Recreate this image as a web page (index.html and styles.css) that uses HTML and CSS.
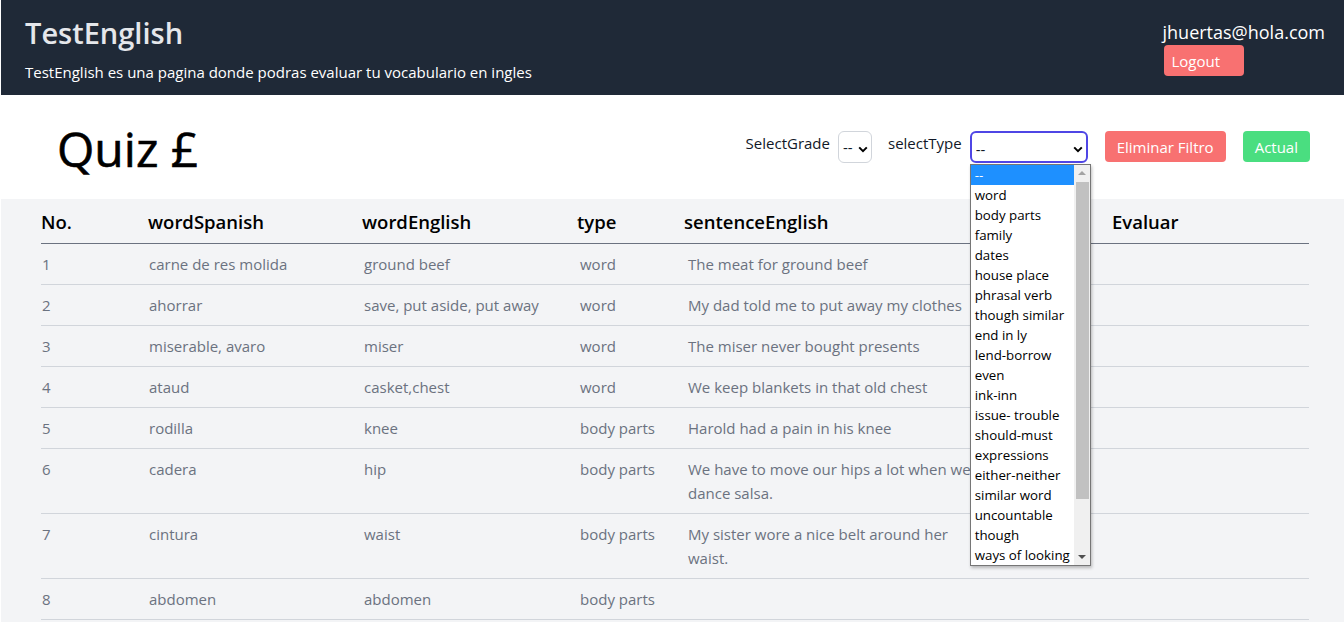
FILE: index.html
```html
<!DOCTYPE html>
<html lang="es">
<head>
<meta charset="utf-8">
<title>TestEnglish</title>
<link rel="stylesheet" href="styles.css">
</head>
<body>
<header class="topbar">
  <div class="brand">
    <h1 class="brand-title">TestEnglish</h1>
    <p class="brand-sub">TestEnglish es una pagina donde podras evaluar tu vocabulario en ingles</p>
  </div>
  <div class="user">
    <span class="user-email">jhuertas@hola.com</span>
    <button class="btn btn-red btn-logout">Logout</button>
  </div>
</header>

<section class="toolbar">
  <h2 class="quiz-title">Quiz £</h2>
  <div class="filters">
    <label class="filter-label">SelectGrade</label>
    <select class="select select-grade"><option>--</option></select>
    <label class="filter-label label-type">selectType</label>
    <div class="type-wrap">
      <select class="select select-type"><option>--</option></select>
      <div class="dropdown">
        <ul class="dropdown-list">
          <li class="active">--</li>
          <li>word</li>
          <li>body parts</li>
          <li>family</li>
          <li>dates</li>
          <li>house place</li>
          <li>phrasal verb</li>
          <li>though similar</li>
          <li>end in ly</li>
          <li>lend-borrow</li>
          <li>even</li>
          <li>ink-inn</li>
          <li>issue- trouble</li>
          <li>should-must</li>
          <li>expressions</li>
          <li>either-neither</li>
          <li>similar word</li>
          <li>uncountable</li>
          <li>though</li>
          <li>ways of looking</li>
        </ul>
        <div class="scrollbar">
          <span class="arrow arrow-up"></span>
          <div class="track"><div class="thumb"></div></div>
          <span class="arrow arrow-down"></span>
        </div>
      </div>
    </div>
    <button class="btn btn-red btn-filter">Eliminar Filtro</button>
    <button class="btn btn-green btn-filter">Actual</button>
  </div>
</section>

<main class="content">
  <table class="quiz-table">
    <colgroup>
      <col class="c-no"><col class="c-es"><col class="c-en"><col class="c-type"><col class="c-sent"><col class="c-eval">
    </colgroup>
    <thead>
      <tr><th>No.</th><th>wordSpanish</th><th>wordEnglish</th><th>type</th><th>sentenceEnglish</th><th>Evaluar</th></tr>
    </thead>
    <tbody>
      <tr><td>1</td><td>carne de res molida</td><td>ground beef</td><td>word</td><td>The meat for ground beef</td><td></td></tr>
      <tr><td>2</td><td>ahorrar</td><td>save, put aside, put away</td><td>word</td><td>My dad told me to put away my clothes</td><td></td></tr>
      <tr><td>3</td><td>miserable, avaro</td><td>miser</td><td>word</td><td>The miser never bought presents</td><td></td></tr>
      <tr><td>4</td><td>ataud</td><td>casket,chest</td><td>word</td><td>We keep blankets in that old chest</td><td></td></tr>
      <tr><td>5</td><td>rodilla</td><td>knee</td><td>body parts</td><td>Harold had a pain in his knee</td><td></td></tr>
      <tr><td>6</td><td>cadera</td><td>hip</td><td>body parts</td><td>We have to move our hips a lot when we dance salsa.</td><td></td></tr>
      <tr><td>7</td><td>cintura</td><td>waist</td><td>body parts</td><td>My sister wore a nice belt around her waist.</td><td></td></tr>
      <tr><td>8</td><td>abdomen</td><td>abdomen</td><td>body parts</td><td></td><td></td></tr>
    </tbody>
  </table>
</main>
</body>
</html>
```

FILE: styles.css
```css
* { box-sizing: border-box; }

html, body {
  margin: 0;
  padding: 0;
  background: #ffffff;
}

body {
  padding-left: 1px;
  font-family: "Open Sans", "Noto Sans", sans-serif;
  font-size: 15px;
  line-height: 24px;
  color: #111827;
}

/* ---------- top bar ---------- */
.topbar {
  display: flex;
  justify-content: space-between;
  align-items: flex-start;
  height: 95px;
  padding: 15px 19px 0 24px;
  background: #1f2937;
}

.brand-title {
  margin: 0;
  font-size: 29px;
  line-height: 36px;
  font-weight: 600;
  color: #e5e7eb;
}

.brand-sub {
  margin: 9px 0 0;
  font-size: 15px;
  line-height: 24px;
  color: #ffffff;
}

.user {
  display: flex;
  flex-direction: column;
  align-items: flex-start;
  padding-top: 3px;
}

.user-email {
  font-size: 18px;
  line-height: 28px;
  color: #ffffff;
}

.btn {
  border: 0;
  border-radius: 4px;
  font-family: inherit;
  font-size: 15px;
  line-height: 24px;
  color: #ffffff;
  cursor: pointer;
}

.btn-red { background: #f87171; }
.btn-green { background: #4ade80; }

.btn-logout {
  margin-top: -1px;
  margin-left: 1px;
  padding: 4px 8px 3px;
  width: 80px;
  text-align: left;
}

/* ---------- toolbar ---------- */
.toolbar {
  display: flex;
  justify-content: space-between;
  align-items: flex-start;
  height: 104px;
  padding: 36px 34px 0 56px;
}

.quiz-title {
  margin: -12px 0 0;
  font-size: 48px;
  line-height: 60px;
  font-weight: 400;
  -webkit-text-stroke: 0.6px #000000;
  color: #000000;
}

.filters {
  display: flex;
  align-items: flex-start;
}

.filter-label {
  font-size: 15px;
  line-height: 24px;
  color: #111827;
  margin-right: 8px;
}

.label-type { margin-left: 16px; }

.select {
  -webkit-appearance: none;
  appearance: none;
  height: 32px;
  margin: 0;
  font-family: inherit;
  font-size: 15px;
  color: #111827;
  background-color: #ffffff;
  background-repeat: no-repeat;
  background-image: url("data:image/svg+xml;utf8,<svg xmlns='http://www.w3.org/2000/svg' width='10' height='7' viewBox='0 0 10 7'><path d='M1.2 1.4 L5 5.2 L8.8 1.4' fill='none' stroke='black' stroke-width='2'/></svg>");
}

.select-grade {
  width: 34px;
  padding: 0 0 0 4px;
  border: 1px solid #d1d5db;
  border-radius: 6px;
  background-position: 19px 14px;
}

.type-wrap {
  position: relative;
}

.select-type {
  width: 118px;
  padding: 4px 0 0 4px;
  border: 2px solid #4f46e5;
  border-radius: 6px;
  background-position: 101px 13px;
  outline: none;
}

.btn-filter {
  margin-left: 17px;
  height: 31px;
  padding: 3px 12px;
}

/* ---------- dropdown overlay ---------- */
.dropdown {
  position: absolute;
  top: 33px;
  left: 0;
  width: 121px;
  height: 402px;
  display: flex;
  background: #ffffff;
  border: 1px solid #767676;
  box-shadow: 1px 2px 3px rgba(0, 0, 0, 0.25);
  z-index: 10;
}

.dropdown-list {
  list-style: none;
  margin: 0;
  padding: 0;
  flex: 1;
  overflow: hidden;
}

.dropdown-list li {
  height: 20px;
  padding-left: 4px;
  font-size: 13.3px;
  line-height: 20px;
  white-space: nowrap;
  color: #000000;
}

.dropdown-list li.active {
  background: #1e90ff;
  color: #ffffff;
}

.scrollbar {
  width: 16px;
  display: flex;
  flex-direction: column;
  background: #f0f0f0;
}

.arrow {
  display: block;
  height: 17px;
  position: relative;
}

.arrow::after {
  content: "";
  position: absolute;
  left: 4px;
  width: 0;
  height: 0;
  border-left: 4px solid transparent;
  border-right: 4px solid transparent;
}

.arrow-up::after {
  top: 6px;
  border-bottom: 4px solid #a3a3a3;
}

.arrow-down::after {
  top: 7px;
  border-top: 4px solid #505050;
}

.track {
  flex: 1;
  padding: 0 1px 0 2px;
}

.thumb {
  height: 317px;
  background: #c1c1c1;
}

/* ---------- table ---------- */
.content {
  background: #f3f4f6;
  padding: 0 34px 2px 40px;
}

.quiz-table {
  width: 1268px;
  border-collapse: collapse;
  table-layout: fixed;
}

.c-no { width: 107px; }
.c-es { width: 214px; }
.c-en { width: 215px; }
.c-type { width: 107px; }
.c-sent { width: 428px; }
.c-eval { width: 197px; }

.quiz-table th {
  text-align: left;
  padding: 9px 0 7px;
  font-size: 18.5px;
  line-height: 28px;
  font-weight: 600;
  color: #000000;
  border-bottom: 1px solid #6b7280;
}

.quiz-table td {
  vertical-align: top;
  padding: 8px 0;
  font-size: 15px;
  line-height: 24px;
  color: #6b7280;
  border-bottom: 1px solid #d1d5db;
}

.quiz-table td:nth-child(1) { padding-left: 1px; }
.quiz-table td:nth-child(2) { padding-left: 1px; }
.quiz-table td:nth-child(3) { padding-left: 2px; }
.quiz-table td:nth-child(4) { padding-left: 3px; }
.quiz-table td:nth-child(5) { padding-left: 4px; padding-right: 128px; }
```
